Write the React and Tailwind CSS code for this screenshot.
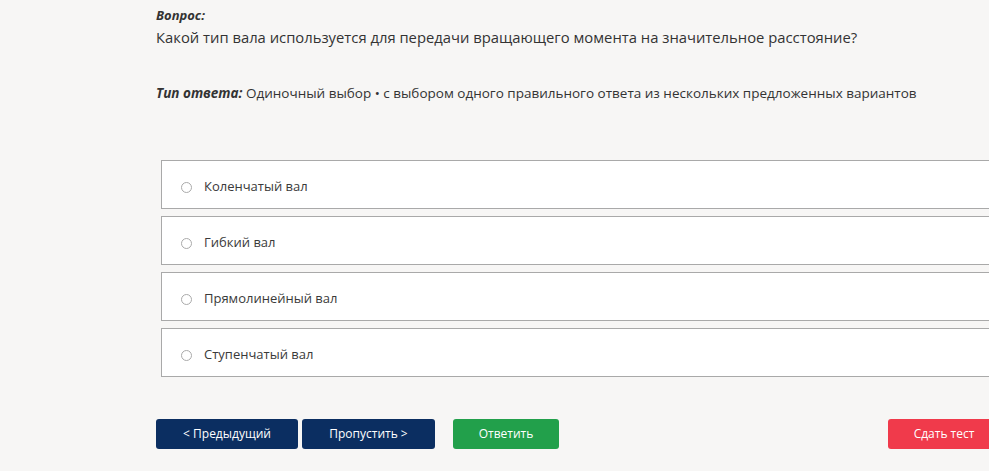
export default function App() {
  const options = ["Коленчатый вал", "Гибкий вал", "Прямолинейный вал", "Ступенчатый вал"];
  return (
    <div
      className="w-[989px] h-[471px] overflow-hidden bg-[#f7f6f5] text-[#333]"
      style={{ fontFamily: '"Open Sans", "Noto Sans", sans-serif' }}
    >
      <div className="w-[1060px] pl-[156px] pt-[6px]">
        <div className="text-[13px] font-bold italic leading-[18px]">Вопрос:</div>
        <div className="text-[14.8px] leading-[22px] mt-[2px]">
          Какой тип вала используется для передачи вращающего момента на значительное расстояние?
        </div>
        <div className="text-[13.5px] leading-[18px] mt-[36px]">
          <span className="font-bold italic">Тип ответа:</span> Одиночный выбор • с выбором одного правильного ответа из нескольких предложенных вариантов
        </div>

        <div className="mt-[58px] ml-[5px] flex flex-col gap-[7px]">
          {options.map((o) => (
            <label
              key={o}
              className="h-[49px] bg-white border border-[#a9a9a9] flex items-center pl-[19px] pt-[5px] text-[13px] text-[#3a3a3a]"
            >
              <span className="w-[11px] h-[11px] rounded-full border border-[#aaa] bg-white mr-[12px]" />
              {o}
            </label>
          ))}
        </div>

        <div className="mt-[42px] flex items-center text-[12px] text-white">
          <button className="w-[142px] h-[30px] rounded-[3px] bg-[#0b2e61]">&lt; Предыдущий</button>
          <button className="ml-[4px] w-[133px] h-[30px] rounded-[3px] bg-[#0b2e61]">Пропустить &gt;</button>
          <button className="ml-[18px] w-[106px] h-[30px] rounded-[3px] bg-[#22a04b]">Ответить</button>
          <button className="ml-[329px] w-[112px] h-[30px] rounded-[3px] bg-[#f03a4b]">Сдать тест</button>
        </div>
      </div>
    </div>
  );
}
